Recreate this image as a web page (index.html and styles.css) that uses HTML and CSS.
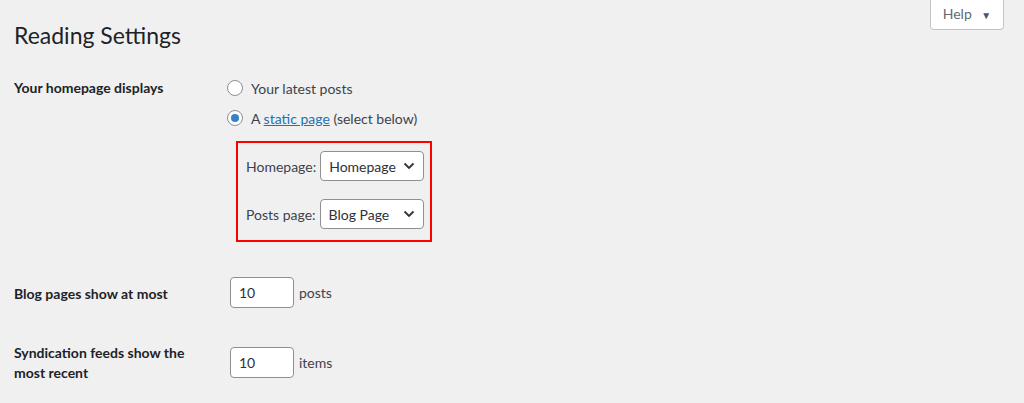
FILE: index.html
```html
<!DOCTYPE html>
<html lang="en">
<head>
  <meta charset="UTF-8">
  <title>Reading Settings</title>
  <link rel="stylesheet" href="styles.css">
</head>
<body>
  <div class="wrap">
    <div class="header">
      <h1>Reading Settings</h1>
      <button class="help-btn">Help <span class="caret">&#9660;</span></button>
    </div>

    <div class="form-table">
      <div class="row row-front">
        <div class="label">Your homepage displays</div>
        <div class="field">
          <label class="radio-line"><span class="radio"></span>Your latest posts</label>
          <label class="radio-line"><span class="radio checked"></span>A&nbsp;<a href="#">static page</a>&nbsp;(select below)</label>
          <div class="page-box">
            <div class="select-line">
              <span>Homepage:</span>
              <span class="select">Homepage<svg width="12" height="8" viewBox="0 0 12 8"><path d="M1.5 1.5 L6 6 L10.5 1.5" fill="none" stroke="#2c3338" stroke-width="1.8"/></svg></span>
            </div>
            <div class="select-line">
              <span>Posts page:</span>
              <span class="select">Blog Page<svg width="12" height="8" viewBox="0 0 12 8"><path d="M1.5 1.5 L6 6 L10.5 1.5" fill="none" stroke="#2c3338" stroke-width="1.8"/></svg></span>
            </div>
          </div>
        </div>
      </div>

      <div class="row row-posts">
        <div class="label">Blog pages show at most</div>
        <div class="field inline"><span class="num">10</span>posts</div>
      </div>

      <div class="row row-feed">
        <div class="label">Syndication feeds show the most recent</div>
        <div class="field inline"><span class="num">10</span>items</div>
      </div>
    </div>
  </div>
</body>
</html>
```

FILE: styles.css
```css
body {
  margin: 0;
  background-color: #f0f0f1;
  font-family: Lato, "Noto Sans", Arial, sans-serif;
  font-size: 14px;
  color: #3c434a;
}

.wrap {
  padding: 0 20px 0 14px;
}

.header {
  display: flex;
  justify-content: space-between;
  align-items: flex-start;
}

h1 {
  margin: 20px 0 0 0;
  font-size: 23px;
  font-weight: 400;
  line-height: 30px;
  color: #1d2327;
}

.help-btn {
  width: 74px;
  height: 30px;
  background: #fff;
  border: 1px solid #c3c4c7;
  border-top: none;
  border-radius: 0 0 4px 4px;
  font-family: inherit;
  font-size: 14px;
  color: #646970;
  padding: 0 0 2px 0;
}

.caret {
  font-size: 10px;
  margin-left: 6px;
  color: #50575e;
}

.form-table {
  margin-top: 28px;
}

.row {
  display: grid;
  grid-template-columns: 215px 1fr;
}

.label {
  font-weight: 700;
  color: #1d2327;
  line-height: 20px;
  width: 200px;
}

.radio-line {
  display: flex;
  align-items: center;
  height: 20px;
  margin-bottom: 10px;
}

.radio {
  width: 14px;
  height: 14px;
  border: 1px solid #8c8f94;
  border-radius: 50%;
  background: #fff;
  margin-right: 8px;
  margin-left: -2px;
  display: flex;
  align-items: center;
  justify-content: center;
}

.radio.checked::after {
  content: "";
  width: 8px;
  height: 8px;
  border-radius: 50%;
  background: #3582c4;
}

a {
  color: #2271b1;
}

.page-box {
  width: 184px;
  border: 2px solid #ff0000;
  margin-left: 7px;
  margin-top: 13px;
  padding: 8px 0 11px 8px;
}

.select-line {
  display: flex;
  align-items: center;
  gap: 4px;
}

.select-line + .select-line {
  margin-top: 18px;
}

.select {
  display: flex;
  align-items: center;
  justify-content: space-between;
  box-sizing: border-box;
  width: 104px;
  height: 30px;
  padding: 0 8px 0 8px;
  background: #fff;
  border: 1px solid #8c8f94;
  border-radius: 4px;
  color: #2c3338;
}

.row-posts {
  margin-top: 35px;
}

.row-posts .label {
  padding-top: 7px;
}

.row-feed {
  margin-top: 39px;
}

.row-feed .label {
  margin-top: -4px;
}

.inline {
  display: flex;
  align-items: flex-start;
  line-height: 31px;
}

.num {
  box-sizing: border-box;
  width: 64px;
  height: 31px;
  padding: 5px 8px;
  line-height: 20px;
  background: #fff;
  border: 1px solid #8c8f94;
  border-radius: 4px;
  color: #2c3338;
  margin-right: 5px;
  margin-left: 1px;
}
```
